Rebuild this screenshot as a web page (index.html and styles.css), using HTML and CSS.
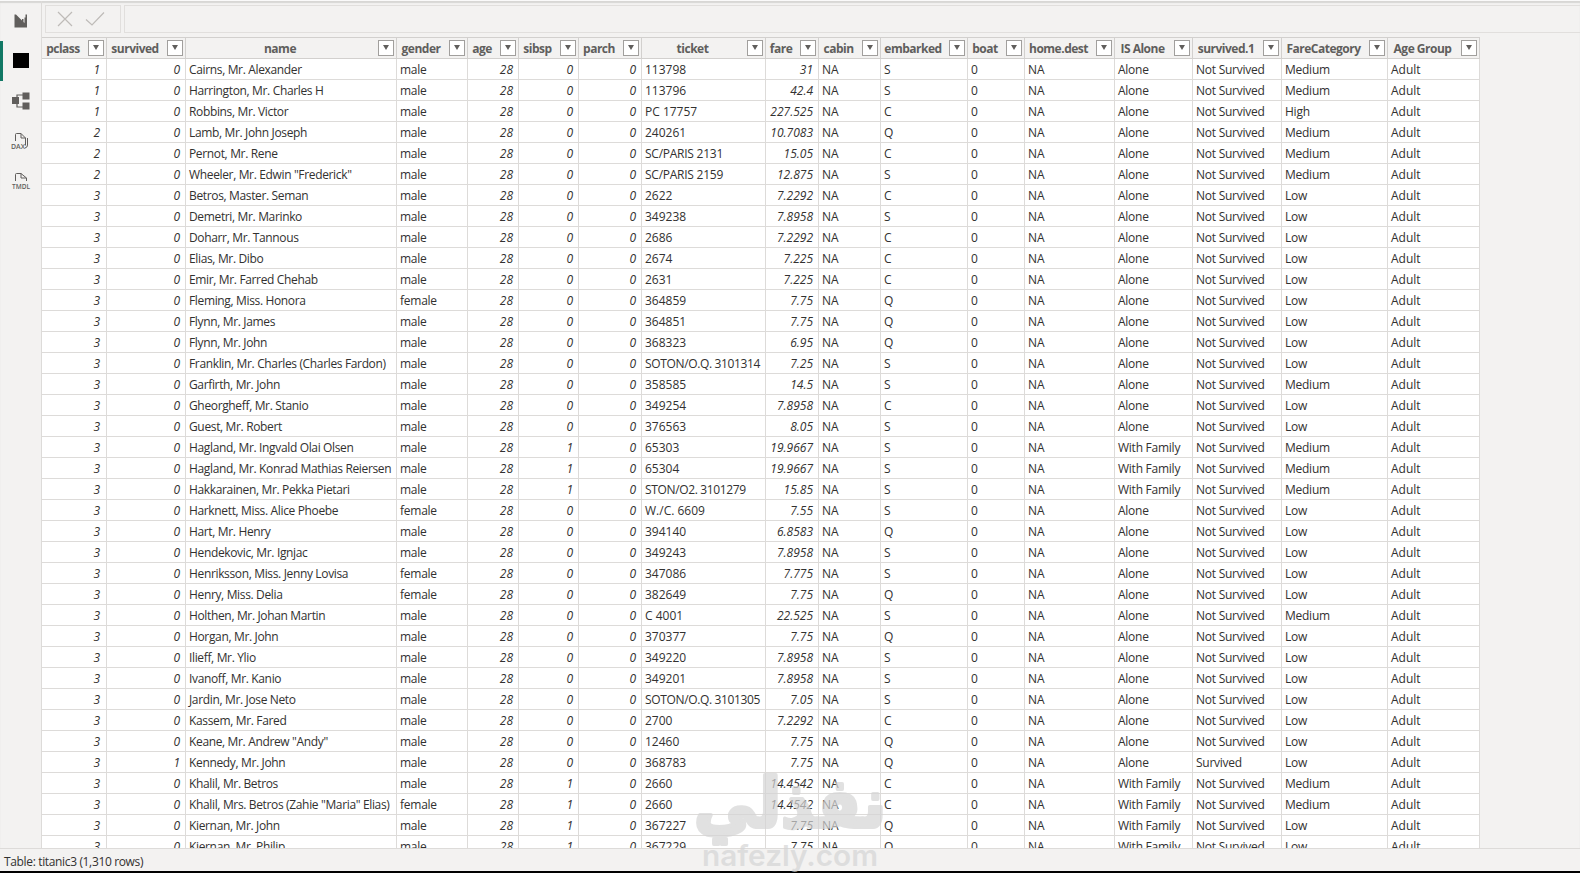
FILE: index.html
```
<!DOCTYPE html>
<html lang="en">
<head>
    <meta charset="UTF-8">
    <meta name="viewport" content="width=device-width, initial-scale=1.0">
    <title>titanic3 - Table view</title>
    <link rel="stylesheet" href="styles.css">
</head>
<body>

<div class="app">
    <nav class="sidebar">
        <a class="view" title="Report view">
            <svg width="14" height="14" viewBox="0 0 14 14"><path d="M0.5 0.5H2L8 6.5V5H9.5V8L10.5 9V3.5H11.5V0.5H13V13.5H0.5Z" fill="#605e5c"/></svg>
        </a>
        <a class="view active" title="Table view">
            <svg width="16" height="16" viewBox="0 0 16 16"><rect width="16" height="15" fill="#000"/></svg>
        </a>
        <a class="view" title="Model view">
            <svg width="18" height="18" viewBox="0 0 18 18">
                <path d="M5 5V3H11M5 12V15H11" fill="none" stroke="#605e5c" stroke-width="1.2"/>
                <rect x="0" y="5" width="7" height="7" fill="#605e5c"/>
                <rect x="10.5" y="0.5" width="7" height="7" fill="#605e5c"/>
                <rect x="10.5" y="10.5" width="7" height="7" fill="#605e5c"/>
            </svg>
        </a>
        <a class="view" title="DAX query view">
            <svg width="20" height="18" viewBox="0 0 20 18">
                <path d="M4.5 9V2.5Q4.5 1.5 5.5 1.5H10L14.5 6V13.5M10 1.5V6H14.5M16.5 6V13Q16.5 15.5 14 16" fill="none" stroke="#605e5c"/>
                <text x="0" y="17" class="icon-text" textLength="14" lengthAdjust="spacingAndGlyphs">DAX</text>
            </svg>
        </a>
        <a class="view" title="TMDL view">
            <svg width="20" height="18" viewBox="0 0 20 18">
                <path d="M4.5 9V2.5Q4.5 1.5 5.5 1.5H10L15.5 6V9M10 1.5V6H15.5" fill="none" stroke="#605e5c"/>
                <text x="1" y="17" class="icon-text" textLength="18" lengthAdjust="spacingAndGlyphs">TMDL</text>
            </svg>
        </a>
    </nav>

    <main class="main">
        <div class="formula-bar">
            <div class="formula-actions">
                <svg width="16" height="16" viewBox="0 0 16 16"><path d="M1 1L15 15M15 1L1 15" fill="none" stroke="#bebbb8" stroke-width="1.2"/></svg>
                <svg width="20" height="16" viewBox="0 0 20 16"><path d="M1 8.5L7 14L19 1.5" fill="none" stroke="#bebbb8" stroke-width="1.2"/></svg>
            </div>
            <div class="formula-input"></div>
        </div>
        <div class="grid">
            <table>
                <colgroup id="cols"></colgroup>
                <thead><tr id="headRow"></tr></thead>
                <tbody id="rows"></tbody>
            </table>
        </div>
    </main>
</div>

<footer class="status">Table: titanic3 (1,310 rows)</footer>

<svg class="watermark" width="200" height="103" viewBox="0 0 200 103">
    <text x="100" y="57" class="wm-arabic" text-anchor="middle" textLength="192" lengthAdjust="spacingAndGlyphs">نفذلي</text>
    <text x="12" y="96" class="wm-latin" textLength="176" lengthAdjust="spacingAndGlyphs">nafezly.com</text>
</svg>

<script>
    const columns = [
        { name: 'pclass', width: 65, num: true },
        { name: 'survived', width: 79, num: true },
        { name: 'name', width: 211, cls: 'tight' },
        { name: 'gender', width: 71, cls: 'snug' },
        { name: 'age', width: 51, num: true },
        { name: 'sibsp', width: 60, num: true },
        { name: 'parch', width: 63, num: true },
        { name: 'ticket', width: 124 },
        { name: 'fare', width: 53, num: true },
        { name: 'cabin', width: 62 },
        { name: 'embarked', width: 87 },
        { name: 'boat', width: 57 },
        { name: 'home.dest', width: 90 },
        { name: 'IS Alone', width: 78, cls: 'snug' },
        { name: 'survived.1', width: 89, cls: 'snug' },
        { name: 'FareCategory', width: 106, cls: 'snug' },
        { name: 'Age Group', width: 92 }
    ];

    // pclass, survived, name, gender, sibsp, ticket, fare, embarked, fare category
    const passengers = [
        [1, 0, 'Cairns, Mr. Alexander', 'male', 0, '113798', 31, 'S', 'Medium'],
        [1, 0, 'Harrington, Mr. Charles H', 'male', 0, '113796', 42.4, 'S', 'Medium'],
        [1, 0, 'Robbins, Mr. Victor', 'male', 0, 'PC 17757', 227.525, 'C', 'High'],
        [2, 0, 'Lamb, Mr. John Joseph', 'male', 0, '240261', 10.7083, 'Q', 'Medium'],
        [2, 0, 'Pernot, Mr. Rene', 'male', 0, 'SC/PARIS 2131', 15.05, 'C', 'Medium'],
        [2, 0, 'Wheeler, Mr. Edwin "Frederick"', 'male', 0, 'SC/PARIS 2159', 12.875, 'S', 'Medium'],
        [3, 0, 'Betros, Master. Seman', 'male', 0, '2622', 7.2292, 'C', 'Low'],
        [3, 0, 'Demetri, Mr. Marinko', 'male', 0, '349238', 7.8958, 'S', 'Low'],
        [3, 0, 'Doharr, Mr. Tannous', 'male', 0, '2686', 7.2292, 'C', 'Low'],
        [3, 0, 'Elias, Mr. Dibo', 'male', 0, '2674', 7.225, 'C', 'Low'],
        [3, 0, 'Emir, Mr. Farred Chehab', 'male', 0, '2631', 7.225, 'C', 'Low'],
        [3, 0, 'Fleming, Miss. Honora', 'female', 0, '364859', 7.75, 'Q', 'Low'],
        [3, 0, 'Flynn, Mr. James', 'male', 0, '364851', 7.75, 'Q', 'Low'],
        [3, 0, 'Flynn, Mr. John', 'male', 0, '368323', 6.95, 'Q', 'Low'],
        [3, 0, 'Franklin, Mr. Charles (Charles Fardon)', 'male', 0, 'SOTON/O.Q. 3101314', 7.25, 'S', 'Low'],
        [3, 0, 'Garfirth, Mr. John', 'male', 0, '358585', 14.5, 'S', 'Medium'],
        [3, 0, 'Gheorgheff, Mr. Stanio', 'male', 0, '349254', 7.8958, 'C', 'Low'],
        [3, 0, 'Guest, Mr. Robert', 'male', 0, '376563', 8.05, 'S', 'Low'],
        [3, 0, 'Hagland, Mr. Ingvald Olai Olsen', 'male', 1, '65303', 19.9667, 'S', 'Medium'],
        [3, 0, 'Hagland, Mr. Konrad Mathias Reiersen', 'male', 1, '65304', 19.9667, 'S', 'Medium'],
        [3, 0, 'Hakkarainen, Mr. Pekka Pietari', 'male', 1, 'STON/O2. 3101279', 15.85, 'S', 'Medium'],
        [3, 0, 'Harknett, Miss. Alice Phoebe', 'female', 0, 'W./C. 6609', 7.55, 'S', 'Low'],
        [3, 0, 'Hart, Mr. Henry', 'male', 0, '394140', 6.8583, 'Q', 'Low'],
        [3, 0, 'Hendekovic, Mr. Ignjac', 'male', 0, '349243', 7.8958, 'S', 'Low'],
        [3, 0, 'Henriksson, Miss. Jenny Lovisa', 'female', 0, '347086', 7.775, 'S', 'Low'],
        [3, 0, 'Henry, Miss. Delia', 'female', 0, '382649', 7.75, 'Q', 'Low'],
        [3, 0, 'Holthen, Mr. Johan Martin', 'male', 0, 'C 4001', 22.525, 'S', 'Medium'],
        [3, 0, 'Horgan, Mr. John', 'male', 0, '370377', 7.75, 'Q', 'Low'],
        [3, 0, 'Ilieff, Mr. Ylio', 'male', 0, '349220', 7.8958, 'S', 'Low'],
        [3, 0, 'Ivanoff, Mr. Kanio', 'male', 0, '349201', 7.8958, 'S', 'Low'],
        [3, 0, 'Jardin, Mr. Jose Neto', 'male', 0, 'SOTON/O.Q. 3101305', 7.05, 'S', 'Low'],
        [3, 0, 'Kassem, Mr. Fared', 'male', 0, '2700', 7.2292, 'C', 'Low'],
        [3, 0, 'Keane, Mr. Andrew "Andy"', 'male', 0, '12460', 7.75, 'Q', 'Low'],
        [3, 1, 'Kennedy, Mr. John', 'male', 0, '368783', 7.75, 'Q', 'Low'],
        [3, 0, 'Khalil, Mr. Betros', 'male', 1, '2660', 14.4542, 'C', 'Medium'],
        [3, 0, 'Khalil, Mrs. Betros (Zahie "Maria" Elias)', 'female', 1, '2660', 14.4542, 'C', 'Medium'],
        [3, 0, 'Kiernan, Mr. John', 'male', 1, '367227', 7.75, 'Q', 'Low'],
        [3, 0, 'Kiernan, Mr. Philip', 'male', 1, '367229', 7.75, 'Q', 'Low']
    ];

    const cols = document.getElementById('cols');
    const headRow = document.getElementById('headRow');
    columns.forEach(column => {
        const col = document.createElement('col');
        col.style.width = column.width + 'px';
        cols.appendChild(col);

        const th = document.createElement('th');
        th.innerHTML = '<div class="head"><span>' + column.name + '</span><button class="filter"></button></div>';
        headRow.appendChild(th);
    });

    const rows = document.getElementById('rows');
    passengers.forEach(([pclass, survived, name, gender, sibsp, ticket, fare, embarked, category]) => {
        const values = [
            pclass, survived, name, gender, 28, sibsp, 0, ticket, fare, 'NA', embarked, 0, 'NA',
            sibsp ? 'With Family' : 'Alone',
            survived ? 'Survived' : 'Not Survived',
            category, 'Adult'
        ];
        const tr = document.createElement('tr');
        values.forEach((value, i) => {
            const td = document.createElement('td');
            td.textContent = value;
            if (columns[i].num) td.className = 'num';
            else if (columns[i].cls) td.className = columns[i].cls;
            // long ticket codes need the whole column
            if (columns[i].name === 'ticket' && value.length > 12) td.className = value.length > 14 ? 'tight' : 'snug';
            tr.appendChild(td);
        });
        rows.appendChild(tr);
    });
</script>

</body>
</html>
```
FILE: styles.css
```
* { box-sizing: border-box; }
body { margin: 0; height: 873px; overflow: hidden; display: flex; flex-direction: column; background: #f3f2f1; color: #323130; font-family: "Open Sans", "Noto Sans", sans-serif; font-size: 12px; border-bottom: 2px solid #000; }
.app { flex: 1; min-height: 0; display: flex; border-top: 1px solid #fafafa; box-shadow: inset 0 2px 1px #d8d7d5; }

.sidebar { width: 41px; display: flex; flex-direction: column; flex: none; }
.view { height: 40px; display: flex; align-items: center; justify-content: center; border-left: 3px solid transparent; padding-right: 3px; }
.view.active { border-left-color: #117865; }
.icon-text { font-size: 7px; font-weight: 600; fill: #605e5c; }

.main { flex: 1; min-width: 0; display: flex; flex-direction: column; border-left: 1px solid #dddbd9; }
.formula-bar { height: 36px; flex: none; padding: 4px 0 4px 3px; display: flex; gap: 3px; }
.formula-actions { width: 76px; display: flex; align-items: center; gap: 12px; padding-left: 11px; border: 1px solid #e1dfdd; }
.formula-input { flex: 1; border: 1px solid #e1dfdd; border-right: 0; }

.grid { flex: 1; min-height: 0; overflow: hidden; }
table { width: 1438px; table-layout: fixed; border-collapse: separate; border-spacing: 0; background: #fff; }
th { height: 22px; padding: 0; background: #f3f2f1; border: 1px solid #d2d0ce; border-left: 0; color: #605e5c; font-weight: 700; letter-spacing: -0.5px; }
.head { display: flex; align-items: center; height: 20px; padding: 0 2px 0 2px; }
.head span { flex: 1; min-width: 0; margin-right: 6px; text-align: center; white-space: nowrap; }
.filter { width: 16px; height: 16px; padding: 0; border: 1px solid #a19f9d; background: #fff; display: flex; justify-content: center; align-items: center; flex: none; }
.filter::before { content: ""; margin-top: -2px; border: 3.5px solid transparent; border-top: 5px solid #605e5c; border-bottom: 0; }
td { height: 21px; padding: 2px 4px 0 3px; line-height: 18px; border-right: 1px solid #dddbd9; border-bottom: 1px solid #dddbd9; white-space: nowrap; }
.num { padding-right: 5px; text-align: right; font-style: italic; }
.num:first-child { padding-right: 6px; }
.tight { letter-spacing: -0.35px; }
.snug { letter-spacing: -0.25px; }

.status { height: 23px; flex: none; padding-left: 4px; line-height: 26px; letter-spacing: -0.35px; border-top: 1px solid #dddbd9; }

.watermark { position: absolute; left: 690px; top: 770px; opacity: 0.7; pointer-events: none; }
.wm-arabic { font: bold 68px "DejaVu Sans", sans-serif; fill: #d5d5d5; stroke: #d5d5d5; stroke-width: 4; stroke-linejoin: round; }
.wm-latin { font: 600 28px Inter, sans-serif; fill: #d5d5d5; }
```
